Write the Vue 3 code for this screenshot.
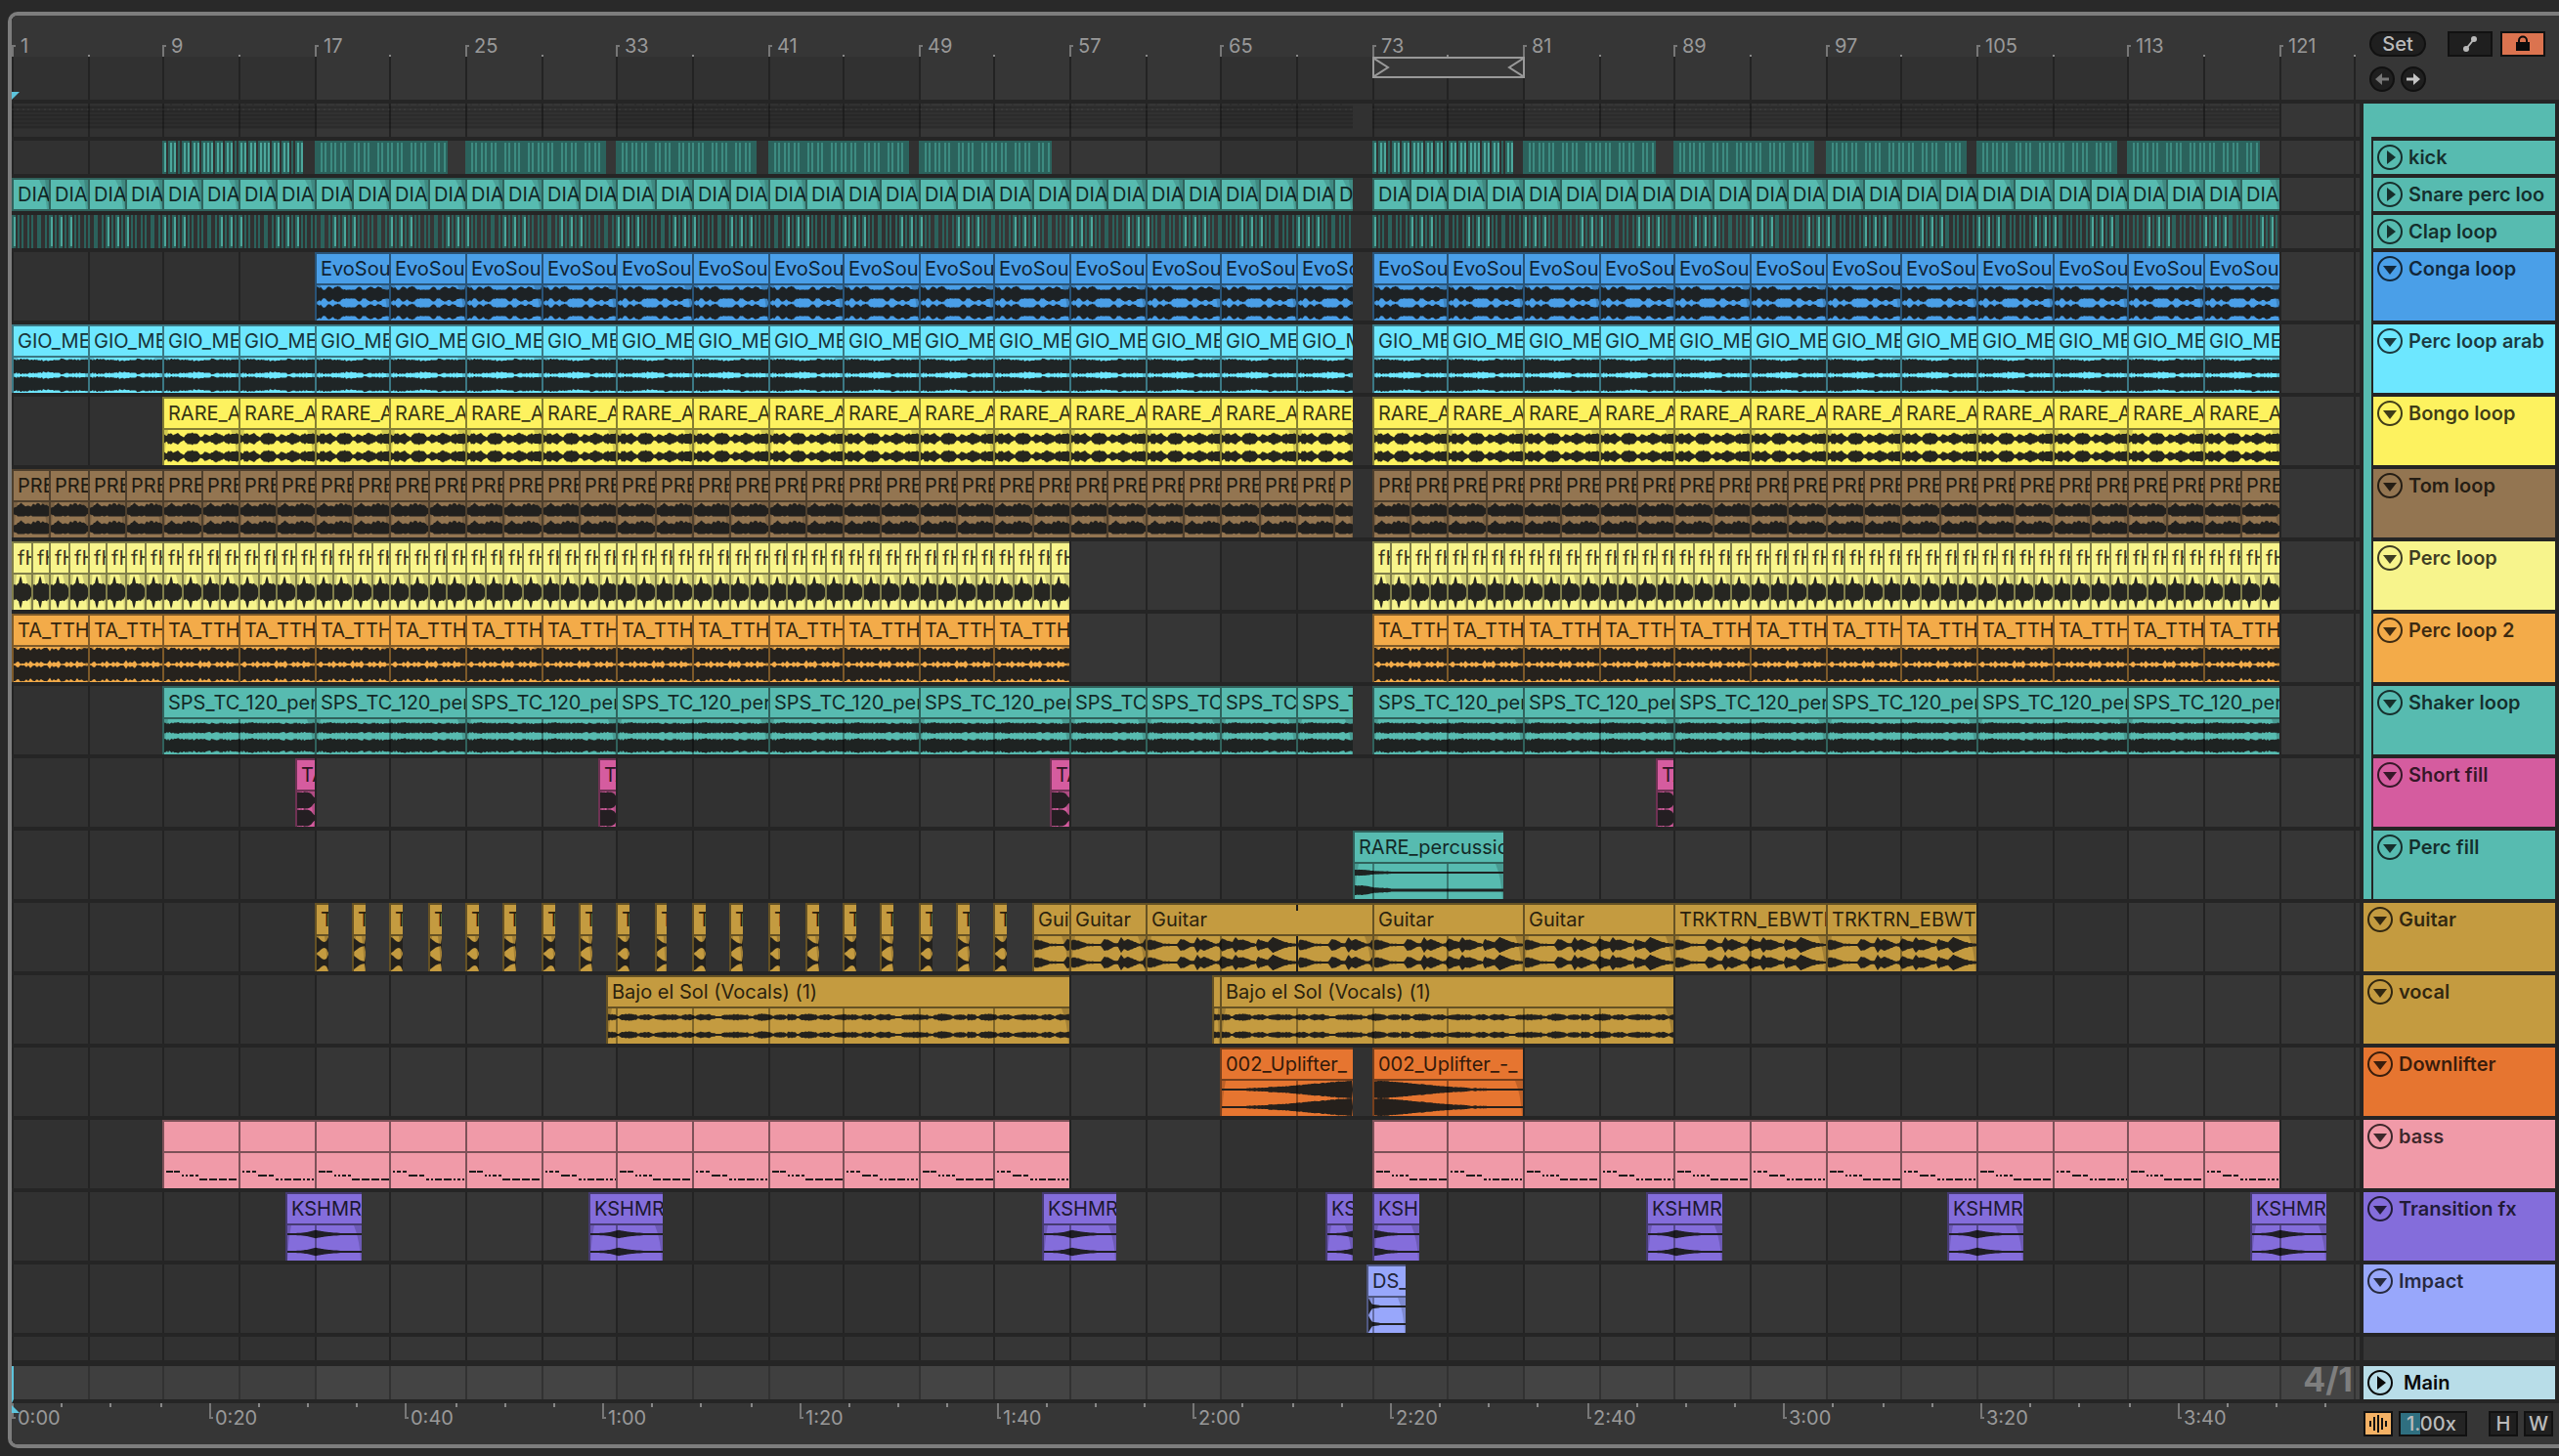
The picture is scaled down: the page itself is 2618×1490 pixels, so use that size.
<script setup>
  // width of one bar on the timeline at the current zoom level
  const BAR = 19.326
  const FIVE_SECONDS = 50.35

  // everything on the timeline snaps to even pixels
  const snap = (v) => 2 * Math.round(v / 2)
  const xOf = (bar) => snap((bar - 1) * BAR)

  const bars = Array.from({ length: 16 }, (_, i) => 1 + i * 8)
  const gridBars = Array.from({ length: 60 }, (_, i) => 1 + i * 4)
  const shadedBars = Array.from({ length: 8 }, (_, i) => 1 + i * 32)
  const times = Array.from({ length: 48 }, (_, i) => {
    const s = i * 5
    return {
      x: snap(i * FIVE_SECONDS),
      label: s % 20 ? "" : Math.floor(s / 60) + ":" + String(s % 60).padStart(2, "0")
    }
  })

  // repeat a clip every `step` bars, the last one is cut at `to`
  function loop(name, from, to, step) {
    const out = []
    for (let b = from; b < to; b += step) {
      out.push({ name, from: b, to: Math.min(b + step, to) })
    }
    return out
  }

  // waveform shapes: [x, amplitude] pairs inside one period
  const even = (list, period) => list.map((a, i) => [(i * period) / (list.length - 1), a])
  const shapes = {
    conga: { period: 76, jitter: 0.6, points: even([7.5, 6.5, 7, 3.5, 5, 7.5, 6.5, 5.5, 7.5, 8, 7.5, 5, 4.2, 4.8, 4.2, 4.8, 4.4, 5.4, 8, 7.5, 4, 3.8, 6.4, 8, 7, 5.5, 7.5, 8, 6.4, 5.2, 4.4, 4.8, 5], 76) },
    arab: { period: 76, jitter: 1, points: even([6.8, 7.2, 6.8, 7, 6, 5.8, 6.8, 7.4, 7, 7.4, 7.2, 7.2], 76) },
    bongo: { period: 76, jitter: 0.9, points: even([4, 3, 5, 5.6, 4, 3.5, 5, 5, 4, 2.2, 2.2, 4.5, 5.6, 5.6, 5.6, 6, 5, 4.5, 1.6, 2.6, 4.6, 5, 4, 3, 3, 5.2, 6.6, 5, 4.2, 3.2, 3.2, 5, 5.6, 5, 5, 5, 5.6, 5.6], 76) },
    tom: { period: 38, jitter: 0.5, cut: 5.4, points: even([3, 4, 5.5, 7, 8, 6, 4.5, 5, 5.5, 4.5, 8, 6, 8, 8, 5.5, 8, 6, 6, 5, 1], 38) },
    perc: { period: 19, jitter: 0.8, mono: true, points: even([7, 8, 7, 8, 8, 10, 15, 17, 11, 8, 9, 8, 8, 9, 7, 8, 7, 4, 2], 19) },
    perc2: { period: 76, jitter: 0.4, points: even([7.8, 7.8, 5.5, 8, 7.8, 8, 6, 8, 5, 8, 8, 6, 8, 5.5, 8, 8, 8, 4.5, 8, 6, 8, 5, 8, 8, 8, 6, 8, 5.5, 8, 8, 5, 8, 6, 8, 7.8, 7.2], 76) },
    shaker: { period: 76, jitter: 0.9, gain: 1.3, points: even([5, 4.5, 5, 5.4, 5, 4.6, 5.2, 5.4, 4.6, 4.4, 5.2, 5, 4.8, 5], 76) },
    fill: { period: 20, jitter: 0.4, points: even([8, 8.4, 8, 8.5, 8, 6.5, 3.5, 1], 20) },
    percfill: { period: 160, jitter: 0.2, gain: 1.6, points: [[0, 3], [6, 3], [12, 2.6], [22, 1.6], [44, 1], [160, 1]] },
    stab: { period: 12, jitter: 0, points: even([8, 7, 5, 3.4, 3, 4, 8], 12) },
    stabTail: { period: 12, jitter: 0, points: even([7, 5.5, 4, 2.6, 1.8, 1.4, 1], 12) },
    guitar: { period: 154.6, jitter: 0.4, points: [[0, 4], [2, 5.6], [8, 4], [15, 1.5], [30, 1], [34, 6], [38, 5.2], [44, 2], [48, 2], [51, 8], [54, 4.2], [58, 6], [64, 3.6], [70, 1.2], [73, 2], [76, 6.6], [84, 3.6], [87, 3], [90, 8], [93, 4.6], [98, 5.6], [104, 3], [111, 1.2], [113, 6], [119, 3.6], [123, 3], [128, 8], [133, 6], [140, 3.4], [147, 1.6], [154.6, 1]] },
    vocal: { period: 184, jitter: 0.6, points: even([3, 3, 1, 3, 3.6, 3, 1.4, 2.8, 3, 1, 2.6, 3, 2.6, 3.2, 1.2, 2.8, 3, 1, 3, 3, 2.6, 1, 1, 2.6, 2.8, 3, 2.8, 2.6, 1, 2.8, 3.6, 3.2, 1.4, 2.6, 2.6, 1], 184) },
    rise: { period: 134, jitter: 0.4, points: [[0, 1], [25, 1.2], [45, 2.2], [70, 3.8], [100, 6.4], [120, 8.2], [134, 9]] },
    fall: { period: 156, jitter: 0.4, points: [[0, 8], [4, 9], [20, 8], [40, 6.2], [60, 4.4], [76, 3], [100, 1.4], [130, 1], [156, 1]] },
    swell: { period: 78, jitter: 0, points: [[0, 1], [14, 1.3], [22, 2.4], [26, 3.6], [29, 4.2], [33, 3.4], [42, 2], [56, 1], [78, 1]] },
    swellEnd: { period: 50, jitter: 0, points: [[0, 4.2], [6, 3.2], [14, 1.8], [26, 1], [50, 1]] },
    impact: { period: 40, jitter: 0, points: [[0, 8.5], [2, 5], [4, 2.2], [12, 1.2], [16, 1], [40, 1]] }
  }

  function noise(n) {
    const s = Math.sin(n * 127.1 + 11.7) * 43758.5453
    return s - Math.floor(s) - 0.5
  }

  function amplitude(shape, x) {
    const t = x % shape.period
    const p = shape.points
    let i = 1
    while (i < p.length - 1 && p[i][0] < t) i++
    const [x0, a0] = p[i - 1]
    const [x1, a1] = p[i]
    const a = a0 + ((a1 - a0) * (t - x0)) / (x1 - x0)
    // keep quiet parts a clean thin line
    return a <= 1.2 ? 1 : Math.max(1, a + noise(Math.floor(t)) * 2 * shape.jitter)
  }

  function channel(shape, width, mid, gain) {
    const top = []
    const bottom = []
    for (let x = 0; x <= width; x++) {
      const a = amplitude(shape, x) * gain
      const low = shape.cut ? Math.min(a, shape.cut) : a
      top.push(x + " " + (mid - a).toFixed(1))
      bottom.unshift(x + " " + (mid + low).toFixed(1))
    }
    return "M" + top.join("L") + "L" + bottom.join("L") + "Z"
  }

  const cache = {}
  function wavePath(name, width) {
    const key = name + width
    if (!cache[key]) {
      const s = shapes[name]
      cache[key] = s.mono
        ? channel(s, width, 18, 1)
        : channel(s, width, 9, 1) + channel(s, width, 27, s.gain || 1)
    }
    return cache[key]
  }

  function fades(w) {
    const f = Math.min(8, w / 3)
    return `M${w - f} 0L${w} 0L${w} 36L${w - 1} 36Q${w - 2} 14 ${w - f} 0ZM0 0L${f / 2} 0Q1 14 0 36Z`
  }

  // clip geometry shared by the template
  function place(clip, wave) {
    const x = xOf(clip.from)
    const w = xOf(clip.to) - x
    const shape = clip.wave || wave
    return {
      ...clip,
      x,
      w,
      path: shape && shape !== "midi" ? wavePath(shape, w - 2) : "",
      lines: gridBars.map((b) => xOf(b) - x - 2).filter((l) => l > 2 && l < w - 4),
      mark: clip.mark ? xOf(clip.mark) - x - 2 : 0
    }
  }

  const stabs = Array.from({ length: 19 }, (_, i) => ({
    name: "T", from: 17 + i * 2, to: 17.72 + i * 2, wave: i % 2 ? "stabTail" : "stab"
  }))

  const drums = [
    { name: "kick", color: "#57bbb0", kind: "kick" },
    { name: "Snare perc loo", color: "#57bbb0", kind: "short", clips: [...loop("DIA", 1, 72, 2), ...loop("DIA", 73, 121, 2)] },
    { name: "Clap loop", color: "#57bbb0", kind: "clap" },
    { name: "Conga loop", color: "#4a9fe8", wave: "conga", clips: [...loop("EvoSou", 17, 72, 4), ...loop("EvoSou", 73, 121, 4)] },
    { name: "Perc loop arab", color: "#6de7ff", wave: "arab", clips: [...loop("GIO_ME", 1, 72, 4), ...loop("GIO_ME", 73, 121, 4)] },
    { name: "Bongo loop", color: "#fdf25f", wave: "bongo", clips: [...loop("RARE_A", 9, 72, 4), ...loop("RARE_A", 73, 121, 4)] },
    { name: "Tom loop", color: "#937551", wave: "tom", clips: [...loop("PRE", 1, 72, 2), ...loop("PRE", 73, 121, 2)] },
    { name: "Perc loop", color: "#f7f48c", wave: "perc", clips: [...loop("fH", 1, 57, 1), ...loop("fH", 73, 121, 1)] },
    { name: "Perc loop 2", color: "#f3ab49", wave: "perc2", clips: [...loop("TA_TTH", 1, 57, 4), ...loop("TA_TTH", 73, 121, 4)] },
    { name: "Shaker loop", color: "#57bbb0", wave: "shaker", clips: [...loop("SPS_TC_120_perc", 9, 57, 8), ...loop("SPS_TC_", 57, 72, 4), ...loop("SPS_TC_120_perc", 73, 121, 8)] },
    { name: "Short fill", color: "#d55c9f", wave: "fill", clips: [16, 32, 56, 88].map((b) => ({ name: "TA", from: b, to: b + 1 })) },
    { name: "Perc fill", color: "#57bbb0", wave: "percfill", clips: [{ name: "RARE_percussio", from: 72, to: 80 }] }
  ]

  const others = [
    {
      name: "Guitar", color: "#c49b40", wave: "guitar", clips: [
        ...stabs,
        { name: "Guitar", from: 55, to: 57 },
        { name: "Guitar", from: 57, to: 61 },
        { name: "Guitar", from: 61, to: 73, mark: 69 },
        { name: "Guitar", from: 73, to: 81 },
        { name: "Guitar", from: 81, to: 89 },
        { name: "TRKTRN_EBWTK", from: 89, to: 97 },
        { name: "TRKTRN_EBWTK", from: 97, to: 105 }
      ]
    },
    {
      name: "vocal", color: "#c49b40", wave: "vocal", clips: [
        { name: "Bajo el Sol (Vocals) (1)", from: 32.5, to: 57 },
        { name: "", from: 64.5, to: 65 },
        { name: "Bajo el Sol (Vocals) (1)", from: 65, to: 89 }
      ]
    },
    {
      name: "Downlifter", color: "#e67530", clips: [
        { name: "002_Uplifter_", from: 65, to: 72, wave: "rise" },
        { name: "002_Uplifter_-_", from: 73, to: 81, wave: "fall" }
      ]
    },
    { name: "bass", color: "#f09aa8", wave: "midi", clips: [...loop("", 9, 57, 4), ...loop("", 73, 121, 4)] },
    {
      name: "Transition fx", color: "#846ddb", wave: "swell", clips: [
        ...[15.5, 31.5, 55.5].map((b) => ({ name: "KSHMR_", from: b, to: b + 4 })),
        { name: "KSH", from: 70.5, to: 72 },
        { name: "KSHM", from: 73, to: 75.5, wave: "swellEnd" },
        ...[87.5, 103.5, 119.5].map((b) => ({ name: "KSHMR_", from: b, to: b + 4 }))
      ]
    },
    { name: "Impact", color: "#98a7fb", wave: "impact", clips: [{ name: "DS_", from: 72.75, to: 74.75 }] }
  ]

  const lanes = [...drums, ...others].map((t) => ({
    ...t,
    clips: (t.clips || []).map((c) => place(c, t.wave))
  }))

  // bass notes, two phrasings that take turns
  const notes = [
    ["7 1 6 2", "2 2 2 2 4 2 3 2", "8 2 8 2 8 2 8 2"],
    ["2 2 4 2 4 2", "9 2 5 2", "3 2 2 2 7 2 8 2 2 2"]
  ]

  // kick: sparse hits first, then solid blocks with lighter hits on top
  const sparse = [[0, 4], [6, 8], [16, 2], [20, 8], [30, 8], [40, 12], [54, 8], [64, 8], [74, 2], [78, 8], [88, 8], [98, 12], [112, 8], [122, 8], [132, 2], [136, 8]]
  const hitOffsets = [6, 10, 16, 20, 26, 30, 40, 44, 50, 54, 64, 68, 74, 78, 84, 88, 98, 102, 108, 112, 122, 126, 132, 136, 142]
  const kickDark = []
  const kickHits = []
  const kickSoft = []
  for (const b of [9, 73]) {
    for (const [o, w] of sparse) {
      kickDark.push({ x: xOf(b) + o, w })
      for (let h = 2; h < w; h += 4) kickHits.push(xOf(b) + o + h)
    }
  }
  const blocks = [[17, 7], [25, 7.5], [33, 7.5], [41, 7.5], [49, 7], [81, 7], [89, 7.5], [97, 7.5], [105, 7.5], [113, 7]]
  for (const [b, len] of blocks) {
    const w = snap(len * BAR)
    kickDark.push({ x: xOf(b), w })
    hitOffsets.filter((o) => o < w - 2).forEach((o) => kickSoft.push(xOf(b) + o))
  }

  // clap: two short notes per half bar, some of them louder
  const clapDark = []
  const clapHits = []
  for (let i = 0; i < 240; i++) {
    const bar = 1 + i / 2
    if (bar >= 72 && bar < 73) continue
    const x = xOf(bar)
    if ([0, 4, 5].includes(i % 6)) {
      clapDark.push({ x, w: 4 })
      clapHits.push(x + 2)
    } else {
      clapDark.push({ x, w: 2 })
    }
    clapDark.push({ x: x + 6, w: 2 })
  }

  // miniature of the folded group
  const groupParts = [[1, 72], [73, 121]].map(([a, b]) => ({ x: xOf(a), w: xOf(b) - xOf(a) }))
  const groupRows = [3, 7, 11, 15, 19, 23]
</script>

<template>
  <main class="arranger">
    <div class="timeline">
      <svg class="grid" width="100%" height="100%" aria-hidden="true">
        <rect v-for="b in shadedBars" :key="'s' + b" :x="xOf(b)" y="0" :width="xOf(b + 16) - xOf(b)" height="100%" fill="#313131" />
        <rect v-for="b in gridBars" :key="b" :x="xOf(b)" y="0" width="2" height="100%" fill="#232323" />
      </svg>

      <div class="bar-ruler">
        <template v-for="b in gridBars" :key="b">
          <span v-if="bars.includes(b)" class="bar" :style="{ left: xOf(b) + 'px' }">{{ b }}</span>
          <span v-else class="minor" :style="{ left: xOf(b) + 'px' }"></span>
        </template>
      </div>

      <div class="scrub">
        <div class="loop" :style="{ left: xOf(73) + 'px', width: xOf(81) - xOf(73) + 2 + 'px' }">
          <svg width="16" height="18" viewBox="0 0 16 18"><path d="M0 0L14 9L0 18" fill="none" stroke="#999" stroke-width="2" /></svg>
          <svg width="16" height="18" viewBox="0 0 16 18"><path d="M16 0L2 9L16 18" fill="none" stroke="#999" stroke-width="2" /></svg>
        </div>
        <svg class="marker" width="8" height="8"><path d="M0 0H8L0 8Z" fill="#5dc4dc" /></svg>
      </div>

      <div class="lane folded">
        <svg width="100%" height="34" aria-hidden="true">
          <g v-for="p in groupParts" :key="p.x">
            <rect :x="p.x" y="2" :width="p.w" height="24" fill="#000" opacity=".08" />
            <rect v-for="y in groupRows" :key="y" :x="p.x" :y="y" :width="p.w" height="2" fill="#000" opacity=".09" />
            <path :d="`M${p.x} 6H${p.x + p.w}`" stroke="#fff" stroke-width="2" stroke-dasharray="2 3 2 4" opacity=".03" />
            <path :d="`M${p.x + 154} 1H${p.x + p.w}`" stroke="#000" stroke-width="2" stroke-dasharray="2 6 2 11" opacity=".08" />
          </g>
        </svg>
      </div>

      <div v-for="lane in lanes" :key="lane.name" class="lane" :class="{ folded: lane.kind }" :style="{ '--c': lane.color }">
        <svg v-if="lane.kind === 'kick'" width="100%" height="34" aria-hidden="true">
          <rect v-for="r in kickDark" :key="'d' + r.x" :x="r.x" y="0" :width="r.w" height="34" fill="#2b625c" />
          <rect v-for="x in kickHits" :key="'h' + x" :x="x" y="2" width="2" height="30" class="hit" />
          <rect v-for="x in kickSoft" :key="'k' + x" :x="x" y="2" width="2" height="30" class="soft" />
        </svg>
        <svg v-else-if="lane.kind === 'clap'" width="100%" height="34" aria-hidden="true">
          <rect v-for="r in clapDark" :key="'d' + r.x" :x="r.x" y="0" :width="r.w" height="34" fill="#2b625c" />
          <rect v-for="x in clapHits" :key="'h' + x" :x="x" y="2" width="2" height="30" class="hit" />
        </svg>
        <template v-else>
          <div
            v-for="(clip, i) in lane.clips"
            :key="clip.x"
            class="clip"
            :class="{ short: lane.kind === 'short' }"
            :style="{ left: clip.x + 'px', width: clip.w + 'px' }"
          >
            <div class="clip-name">{{ clip.name }}</div>
            <svg v-if="lane.kind === 'short'" class="short-fade" :width="clip.w - 2" height="30" aria-hidden="true">
              <path :d="`M${clip.w - 12} 0H${clip.w}V30H${clip.w - 4}Q${clip.w - 6} 10 ${clip.w - 12} 0Z`" fill="#000" opacity=".14" />
              <path :d="`M${clip.w - 6} 0H${clip.w}V30H${clip.w - 2}Z`" fill="#000" opacity=".14" />
            </svg>
            <svg v-else class="wave" :width="clip.w - 2" height="36" aria-hidden="true">
              <template v-if="lane.wave === 'midi'">
                <path d="M2 19H17" :stroke-dasharray="notes[i % 2][0]" />
                <path d="M18 23H36" :stroke-dasharray="notes[i % 2][1]" />
                <path :d="`M36 27H${clip.w - 2}`" :stroke-dasharray="notes[i % 2][2]" />
              </template>
              <template v-else>
                <path class="fade" :d="fades(clip.w - 2)" />
                <path class="shape" :d="clip.path" />
                <rect v-for="l in clip.lines" :key="l" :x="l" y="0" width="2" height="36" fill="#000" opacity=".35" />
                <rect v-if="clip.mark" :x="clip.mark" y="0" width="2" height="36" fill="#1c1c1c" />
              </template>
            </svg>
            <span v-if="clip.mark" class="tick" :style="{ left: clip.mark + 'px' }"></span>
          </div>
        </template>
      </div>

      <div class="lane spare"></div>
      <div class="lane folded main-lane">
        <span class="signature">4/1</span>
      </div>

      <div class="time-ruler">
        <template v-for="t in times" :key="t.x">
          <span v-if="t.label" class="time" :style="{ left: t.x + 'px' }">{{ t.label }}</span>
          <span v-else class="minor" :style="{ left: t.x + 'px' }"></span>
        </template>
        <svg class="marker" width="8" height="10"><path d="M0 2L8 10H0Z" fill="#5dc4dc" /></svg>
      </div>
    </div>

    <aside class="headers">
      <div class="tools">
        <div class="tool-row">
          <button class="pill">Set</button>
          <span class="tool-group">
            <button class="box" aria-label="Automation mode">
              <svg width="16" height="18" viewBox="0 0 16 18">
                <path d="M4 14L12 4" stroke="#b9b9b9" stroke-width="2" />
                <circle cx="4" cy="14" r="3" fill="#b9b9b9" />
                <circle cx="12" cy="4" r="3" fill="#b9b9b9" />
              </svg>
            </button>
            <button class="box lock" aria-label="Lock envelopes">
              <svg width="16" height="18" viewBox="0 0 16 18">
                <path d="M4 9V5.5a4 4 0 0 1 8 0V9" fill="none" stroke="#0b0b0b" stroke-width="2" />
                <rect x="1" y="7" width="14" height="9" fill="#0b0b0b" />
              </svg>
            </button>
          </span>
        </div>
        <div class="tool-row arrows">
          <button class="round" aria-label="Previous locator">
            <svg width="16" height="16" viewBox="0 0 16 16"><path d="M1 8L8 2V14Z" fill="#777" /><path d="M6 8H15" stroke="#777" stroke-width="3" /></svg>
          </button>
          <button class="round" aria-label="Next locator">
            <svg width="16" height="16" viewBox="0 0 16 16"><path d="M15 8L8 2V14Z" fill="#c4c4c4" /><path d="M1 8H10" stroke="#c4c4c4" stroke-width="3" /></svg>
          </button>
        </div>
      </div>

      <section class="group">
        <div class="group-head"></div>
        <div class="group-body">
          <div v-for="t in drums" :key="t.name" class="track" :class="{ folded: t.kind }" :style="{ background: t.color }">
            <button class="fold" :aria-label="'Fold ' + t.name">
              <svg width="26" height="26" viewBox="0 0 26 26">
                <circle cx="13" cy="13" r="12" fill="none" stroke="currentColor" stroke-width="2" />
                <path :d="t.kind ? 'M10 6L19 13L10 20Z' : 'M6 10H20L13 19Z'" fill="currentColor" />
              </svg>
            </button>
            <span>{{ t.name }}</span>
          </div>
        </div>
      </section>

      <div v-for="t in others" :key="t.name" class="track" :style="{ background: t.color }">
        <button class="fold" :aria-label="'Fold ' + t.name">
          <svg width="26" height="26" viewBox="0 0 26 26">
            <circle cx="13" cy="13" r="12" fill="none" stroke="currentColor" stroke-width="2" />
            <path d="M6 10H20L13 19Z" fill="currentColor" />
          </svg>
        </button>
        <span>{{ t.name }}</span>
      </div>

      <div class="spare-head"></div>
      <div class="track folded main-track">
        <button class="fold" aria-label="Fold Main">
          <svg width="26" height="26" viewBox="0 0 26 26">
            <circle cx="13" cy="13" r="12" fill="none" stroke="currentColor" stroke-width="2" />
            <path d="M10 6L19 13L10 20Z" fill="currentColor" />
          </svg>
        </button>
        <span>Main</span>
      </div>

      <div class="status">
        <button class="small amber" aria-label="Draw waveforms">
          <svg width="26" height="22" viewBox="0 0 26 22">
            <path d="M5 8V14M9 4V18M13 2V20M17 5V17M21 8V14" stroke="#111" stroke-width="2" />
          </svg>
        </button>
        <input class="rate" type="text" value="1.00x" aria-label="Zoom rate">
        <span class="fit">
          <button class="small">H</button>
          <button class="small">W</button>
        </span>
      </div>
    </aside>
  </main>
</template>

<style>
body {
  background: #292929;
}
</style>

<style scoped>
.arranger {
  display: grid;
  grid-template-columns: minmax(0, 1fr) 204px;
  margin: 12px 0 8px 8px;
  border: 4px solid #7d7d7d;
  border-right: 0;
  border-radius: 10px 0 0 10px;
  background: #363636;
  font-family: Inter, "Liberation Sans", sans-serif;
  font-size: 20px;
  overflow: hidden;
}

.timeline {
  position: relative;
  overflow: hidden;
}

/* bar lines lie under all the lanes */
.grid {
  position: absolute;
  inset: 0;
}

.bar-ruler {
  height: 42px;
}

.bar-ruler,
.scrub,
.time-ruler {
  position: relative;
}

.bar-ruler,
.time-ruler {
  background: #363636;
  color: #999;
}

.bar {
  position: absolute;
  bottom: 0;
  height: 12px;
  padding-left: 7px;
  border-left: 2px solid #777;
  line-height: 2px;
}

.bar::before {
  content: "";
  position: absolute;
  top: 0;
  left: 0;
  width: 2px;
  height: 2px;
  background: #777;
}

.minor {
  position: absolute;
  bottom: 0;
  width: 2px;
  height: 2px;
  background: #888;
}

.scrub {
  height: 44px;
  border-bottom: 4px solid #252525;
}

.loop {
  position: absolute;
  top: 0;
  display: flex;
  justify-content: space-between;
  box-sizing: border-box;
  height: 22px;
  border: 2px solid #999;
  background: #363636;
}

.marker {
  position: absolute;
  left: 0;
  bottom: 0;
}

.lane {
  position: relative;
  height: 70px;
  border-bottom: 4px solid #252525;
  overflow: hidden;
}

.lane svg {
  display: block;
}

.lane.folded {
  height: 34px;
}

.lane.spare {
  height: 24px;
  border-bottom-width: 6px;
}

.lane.main-lane {
  border-left: 2px solid #5dc4dc;
  background: rgba(255, 255, 255, 0.07);
  background-clip: padding-box;
}

.signature {
  display: block;
  padding-right: 7px;
  color: #7e7e7e;
  font-size: 34px;
  font-weight: 700;
  line-height: 28px;
  text-align: right;
}

.hit {
  fill: #4da79c;
}

.soft {
  fill: #3d8b81;
}

.clip {
  --edge: color-mix(in srgb, var(--c) 50%, #080808);
  position: absolute;
  top: 0;
  bottom: 0;
  box-sizing: border-box;
  border-top: 2px solid var(--edge);
  border-left: 2px solid var(--edge);
  background: var(--c);
  overflow: hidden;
}

.clip-name {
  height: 30px;
  padding-left: 4px;
  border-bottom: 2px solid var(--edge);
  color: color-mix(in srgb, var(--c) 22%, #000);
  line-height: 30px;
  white-space: nowrap;
}

.clip.short {
  border-bottom: 2px solid var(--edge);
}

.clip.short .clip-name {
  border-bottom: 0;
}

.short-fade {
  position: absolute;
  top: 0;
  left: 0;
}

.wave path {
  stroke: #1c1c1c;
  stroke-width: 2;
}

.wave .shape {
  fill: color-mix(in srgb, var(--c) 5%, #1b1b1b);
  stroke: none;
}

.wave .fade {
  fill: rgba(0, 0, 0, 0.17);
  stroke: none;
}

.tick {
  position: absolute;
  top: 0;
  width: 2px;
  height: 6px;
  background: #1c1c1c;
}

.time-ruler {
  height: 42px;
}

.time-ruler .minor {
  top: 0;
  height: 4px;
}

.time-ruler .marker {
  top: 0;
}

.time {
  position: absolute;
  top: 0;
  height: 16px;
  padding-left: 4px;
  border-left: 2px solid #777;
  line-height: 30px;
}

.time::before {
  content: "";
  position: absolute;
  left: 0;
  bottom: 0;
  width: 2px;
  height: 2px;
  background: #777;
}

.headers {
  display: flex;
  flex-direction: column;
  gap: 4px;
  padding: 0 4px;
  background: #252525;
  font-weight: 500;
}

.tools {
  height: 70px;
  margin: 0 -4px;
  padding: 16px 14px 0 10px;
  background: #363636;
}

.tool-row {
  display: flex;
  justify-content: space-between;
}

.tool-row.arrows {
  justify-content: flex-start;
  gap: 6px;
  margin-top: 10px;
}

.tool-group,
.fit {
  display: flex;
  gap: 8px;
}

button,
.rate {
  box-sizing: border-box;
  height: 26px;
  margin: 0;
  padding: 0;
  border: 2px solid #111;
  background: #1f1f1f;
  color: #bbb;
  font: inherit;
  line-height: 22px;
}

button {
  display: flex;
  align-items: center;
  justify-content: center;
}

.pill {
  width: 58px;
  border-radius: 13px;
}

.box {
  width: 46px;
}

.lock {
  background: #db734f;
}

.round {
  width: 26px;
  border-radius: 50%;
}

.group-head {
  height: 34px;
  background: #57bbb0;
}

.group-body {
  display: flex;
  flex-direction: column;
  gap: 4px;
  padding-left: 2px;
  border-left: 8px solid #57bbb0;
}

.group-body::before {
  content: "";
}

.track {
  display: flex;
  align-items: flex-start;
  gap: 6px;
  box-sizing: border-box;
  height: 70px;
  padding: 4px 0 0 4px;
  color: rgba(0, 0, 0, 0.75);
  font-weight: 600;
  line-height: 26px;
  white-space: nowrap;
  overflow: hidden;
}

.track.folded {
  height: 34px;
}

.fold {
  flex: none;
  width: 26px;
  border: 0;
  background: none;
  color: inherit;
}

.main-track {
  gap: 11px;
  background: #b8dde8;
  color: #0a0a0a;
}

.spare-head {
  height: 24px;
  margin-bottom: 2px;
  background: #363636;
}

.status {
  display: flex;
  gap: 6px;
  height: 34px;
  margin: 0 -4px;
  padding: 8px 6px 0 4px;
  background: #363636;
}

.small {
  width: 30px;
}

.amber {
  background: #f5b265;
}

.rate {
  width: 70px;
  padding-left: 6px;
  background: linear-gradient(to right, #2f6f80 20px, #242424 20px);
}

.fit {
  gap: 6px;
  margin-left: auto;
}
</style>
